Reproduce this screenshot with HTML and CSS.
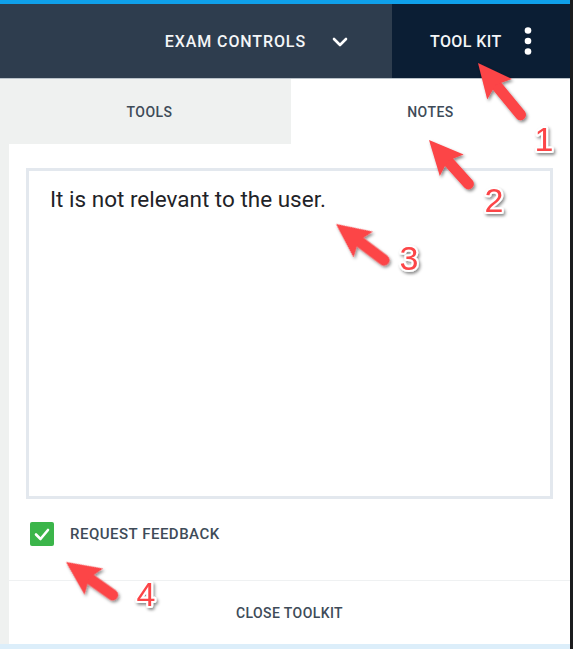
FILE: index.html
```html
<!DOCTYPE html>
<html lang="en">
<head>
<meta charset="utf-8">
<title>Tool Kit</title>
<link rel="stylesheet" href="styles.css">
</head>
<body>
<div class="frame">
  <div class="app">
    <div class="topline"></div>
    <header class="header">
      <div class="exam">
        <span class="exam-label">EXAM CONTROLS</span>
        <svg class="chev" width="16" height="10" viewBox="0 0 16 10"><polyline points="2,2 8,8 14,2" fill="none" stroke="#fff" stroke-width="2.6" stroke-linecap="round" stroke-linejoin="round"/></svg>
      </div>
      <div class="kit">
        <span class="kit-label">TOOL KIT</span>
        <svg class="dots" width="8" height="28" viewBox="0 0 8 28"><circle cx="4" cy="3.5" r="3.3" fill="#fff"/><circle cx="4" cy="14" r="3.3" fill="#fff"/><circle cx="4" cy="24.5" r="3.3" fill="#fff"/></svg>
      </div>
    </header>
    <nav class="tabs">
      <div class="tab tools">TOOLS</div>
      <div class="tab active">NOTES</div>
    </nav>
    <main class="body">
      <div class="gutter"></div>
      <section class="panel">
        <div class="notes-wrap">
          <div class="notes">It is not relevant to the user.</div>
        </div>
        <label class="feedback">
          <span class="check"><svg width="24" height="24" viewBox="0 0 24 24"><polyline points="6,12.5 10.5,17 18,8" fill="none" stroke="#fff" stroke-width="2.6" stroke-linecap="round" stroke-linejoin="round"/></svg></span>
          <span class="feedback-label">REQUEST FEEDBACK</span>
        </label>
        <div class="close">CLOSE TOOLKIT</div>
      </section>
    </main>
    <div class="bottomline"></div>
  </div>
  <div class="edge"></div>

  <svg class="annot" width="573" height="649" viewBox="0 0 573 649">
    <defs>
      <filter id="sh" x="-30%" y="-30%" width="160%" height="160%">
        <feDropShadow dx="1.5" dy="2" stdDeviation="1.6" flood-color="#000" flood-opacity="0.45"/>
      </filter>
      <polygon id="head" points="0,0 34,-16 28,0 34,16" fill="#fc4447"/>
    </defs>
    <g filter="url(#sh)">
      <g transform="translate(478,63) rotate(50.6)">
        <line x1="22" y1="0" x2="67" y2="0" stroke="#fc4447" stroke-width="11" stroke-linecap="round"/>
        <use href="#head"/>
      </g>
      <g transform="translate(429,140) rotate(48.1)">
        <line x1="22" y1="0" x2="59" y2="0" stroke="#fc4447" stroke-width="11" stroke-linecap="round"/>
        <use href="#head"/>
      </g>
      <g transform="translate(336,224) rotate(36.9)">
        <line x1="22" y1="0" x2="60" y2="0" stroke="#fc4447" stroke-width="11" stroke-linecap="round"/>
        <use href="#head"/>
      </g>
      <g transform="translate(66,562) rotate(35.2)">
        <line x1="22" y1="0" x2="57" y2="0" stroke="#fc4447" stroke-width="11" stroke-linecap="round"/>
        <use href="#head"/>
      </g>
    </g>
    <g class="nums" filter="url(#sh)">
      <text x="544" y="151">1</text>
      <text x="494" y="212">2</text>
      <text x="409" y="270">3</text>
      <text x="146" y="606">4</text>
    </g>
  </svg>
</div>
</body>
</html>
```

FILE: styles.css
```css
* { box-sizing: border-box; }
html, body { margin: 0; padding: 0; }
body {
  width: 573px;
  height: 649px;
  overflow: hidden;
  font-family: Roboto, "Liberation Sans", sans-serif;
  background: #fff;
}
.frame {
  position: relative;
  display: flex;
  width: 573px;
  height: 649px;
}
.app {
  width: 570px;
  display: flex;
  flex-direction: column;
}
.edge {
  width: 3px;
  background: #1b1c1e;
}
.topline {
  height: 4px;
  background: #0fa0ea;
}
.header {
  height: 75px;
  display: flex;
  background: #2e3d4e;
  border-bottom: 1px solid #b9c2c9;
}
.exam {
  flex: 1;
  display: flex;
  align-items: center;
  justify-content: flex-end;
  padding-right: 44px;
  gap: 26px;
  color: #fff;
}
.exam-label, .kit-label {
  font-size: 16px;
  font-weight: 500;
  color: #f4f6f8;
}
.exam-label { letter-spacing: 0.9px; }
.kit-label { letter-spacing: 0.4px; }
.chev { margin-top: 1px; }
.kit {
  width: 178px;
  background: #0b1e34;
  display: flex;
  align-items: center;
  padding-left: 38px;
  gap: 22px;
}
.tabs {
  height: 65px;
  display: flex;
}
.tab {
  flex: 1;
  display: flex;
  align-items: center;
  justify-content: center;
  font-size: 14px;
  font-weight: 500;
  letter-spacing: 0.5px;
  color: #3e4b58;
  background: #eff1f0;
}
.tab.tools {
  flex: 0 0 291px;
  padding-left: 8px;
}
.tab.active {
  background: #fff;
}
.body {
  flex: 1;
  display: flex;
}
.gutter {
  width: 9px;
  background: #eff1f0;
}
.panel {
  flex: 1;
  display: flex;
  flex-direction: column;
  background: #fff;
}
.notes-wrap {
  padding: 24px 17px 0 17px;
}
.notes {
  height: 331px;
  border: 3px solid #e3e8ee;
  padding: 12px 21px;
  font-size: 22.5px;
  color: #1f2328;
  line-height: 32px;
}
.feedback {
  height: 82px;
  display: flex;
  align-items: flex-start;
  padding-top: 23px;
  padding-left: 21px;
  gap: 16px;
  border-bottom: 1px solid #eff1f2;
}
.check {
  width: 24px;
  height: 24px;
  border-radius: 2px;
  background: #3bb54a;
  display: flex;
}
.feedback-label {
  font-size: 15px;
  font-weight: 500;
  letter-spacing: 0.5px;
  color: #3e4b58;
  line-height: 24px;
}
.close {
  flex: 1;
  display: flex;
  align-items: center;
  justify-content: center;
  font-size: 14px;
  font-weight: 500;
  letter-spacing: 0.4px;
  color: #3e4b58;
}
.bottomline {
  height: 5px;
  background: #dceefa;
}
.annot {
  position: absolute;
  left: 0;
  top: 0;
  pointer-events: none;
}
.nums text {
  font-family: "Liberation Sans", Arial, sans-serif;
  font-size: 34px;
  fill: #fc4447;
  stroke: #fff;
  stroke-width: 4px;
  paint-order: stroke;
  stroke-linejoin: round;
  text-anchor: middle;
}
```
